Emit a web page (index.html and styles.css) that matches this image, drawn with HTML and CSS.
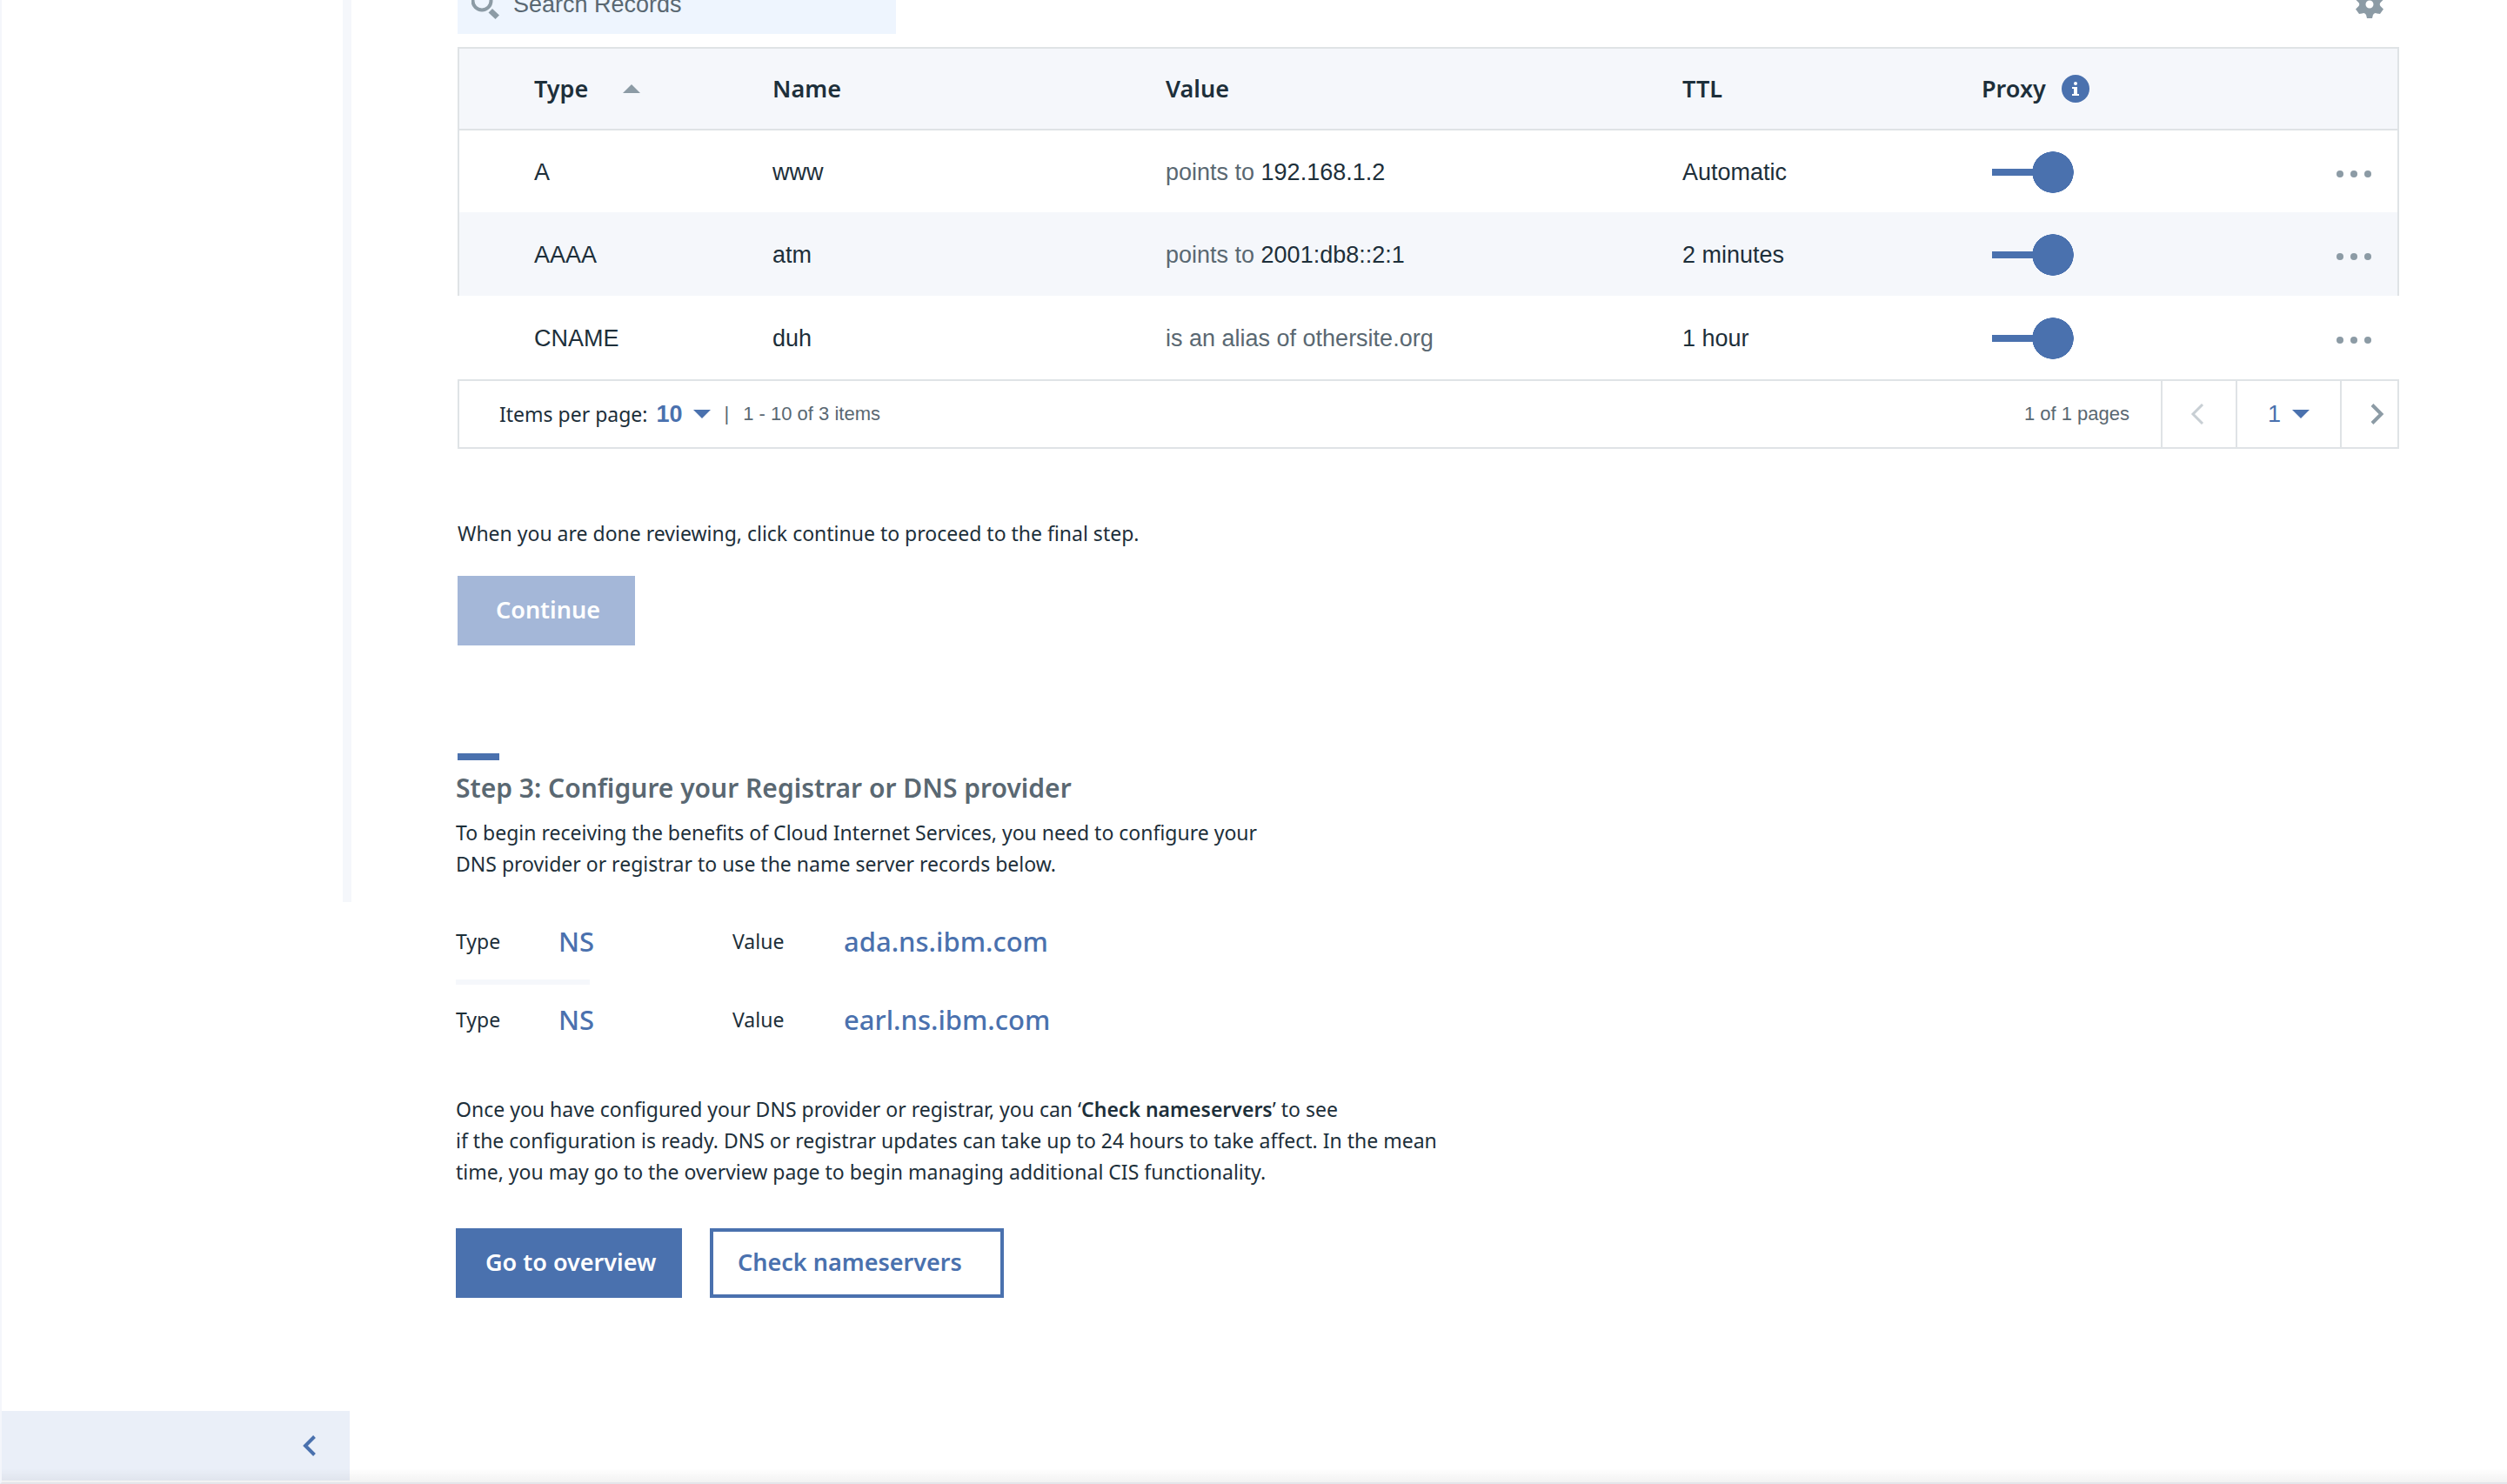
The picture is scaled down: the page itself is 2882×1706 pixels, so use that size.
FILE: index.html
```html
<!DOCTYPE html>
<html lang="en">
<head>
<meta charset="utf-8">
<title>Configure DNS</title>
<link rel="stylesheet" href="styles.css">
</head>
<body>
<div class="page">
  <aside class="sidebar">
    <div class="sidebar-rail"></div>
    <button class="sidebar-toggle" type="button" aria-label="Collapse navigation">
      <svg width="16" height="24" viewBox="0 0 16 24"><path d="M13.500 1.500 3 12l10.500 10.500" fill="none" stroke="currentColor" stroke-width="4"/></svg>
    </button>
  </aside>

  <main class="content">
    <div class="toolbar">
      <label class="search">
        <svg width="32" height="36" viewBox="0 0 32 36" aria-hidden="true"><circle cx="12" cy="14" r="10.500" fill="none" stroke="currentColor" stroke-width="4"/><path d="M19.500 27.500 24 23l8 7.500-4.500 4.500z" fill="currentColor"/></svg>
        <input class="search-input" type="search" placeholder="Search Records" aria-label="Search Records">
      </label>
      <button class="settings" type="button" aria-label="Table settings">
        <svg width="32" height="32" viewBox="-16 -16 32 32"><path fill="currentColor" fill-rule="evenodd" d="M-3 16-4 12Q-6 9-8.500 10.500L-12 11-16 5.500-12.500 2Q-11 0-12.500-2L-16-5.500-12-11-8.500-10.500Q-6-9-4-12L-3-16H3L4-12Q6-9 8.500-10.500L12-11 16-5.500 12.500-2Q11 0 12.500 2L16 5.500 12 11 8.500 10.500Q6 9 4 12L3 16ZM0-4.500A4.500 4.500 0 1 0 0 4.500 4.500 4.500 0 1 0 0-4.500Z"/></svg>
      </button>
    </div>

    <table class="records">
      <colgroup><col class="col-type"><col class="col-name"><col class="col-value"><col class="col-ttl"><col><col class="col-menu"></colgroup>
      <thead>
        <tr>
          <th scope="col"><span class="head sort">Type <svg width="20" height="10" viewBox="0 0 20 10" aria-hidden="true"><path d="M0 10 10 0l10 10z" fill="currentColor"/></svg></span></th>
          <th scope="col">Name</th>
          <th scope="col">Value</th>
          <th scope="col">TTL</th>
          <th scope="col"><span class="head">Proxy <svg class="info" width="32" height="32" viewBox="0 0 32 32" aria-hidden="true"><circle cx="16" cy="16" r="16" fill="currentColor"/><circle cx="16" cy="10" r="2" fill="#fff"/><path d="M12 14h6v8h2v2h-8v-2h2v-6h-2z" fill="#fff"/></svg></span></th>
          <th></th>
        </tr>
      </thead>
      <tbody>
        <tr>
          <td>A</td><td>www</td><td><span class="muted">points to</span> 192.168.1.2</td><td>Automatic</td>
          <td><input class="toggle" type="checkbox" checked aria-label="Proxy for www"></td>
          <td><button class="more" type="button" aria-label="More actions for www"><i></i><i></i><i></i></button></td>
        </tr>
        <tr>
          <td>AAAA</td><td>atm</td><td><span class="muted">points to</span> 2001:db8::2:1</td><td>2 minutes</td>
          <td><input class="toggle" type="checkbox" checked aria-label="Proxy for atm"></td>
          <td><button class="more" type="button" aria-label="More actions for atm"><i></i><i></i><i></i></button></td>
        </tr>
        <tr>
          <td>CNAME</td><td>duh</td><td><span class="muted">is an alias of othersite.org</span></td><td>1 hour</td>
          <td><input class="toggle" type="checkbox" checked aria-label="Proxy for duh"></td>
          <td><button class="more" type="button" aria-label="More actions for duh"><i></i><i></i><i></i></button></td>
        </tr>
      </tbody>
    </table>

    <div class="pagination">
      <label class="per-page" for="per-page">Items per page:</label>
      <span class="picker">
        <select class="picker-size" id="per-page"><option>10</option></select>
        <svg width="20" height="10" viewBox="0 0 20 10" aria-hidden="true"><path d="M0 0h20L10 10z" fill="currentColor"/></svg>
      </span>
      <span class="bar">|</span>
      <span class="count">1 - 10 of 3 items</span>
      <span class="count pages">1 of 1 pages</span>
      <button class="prev" type="button" disabled aria-label="Previous page"><svg width="16" height="24" viewBox="0 0 16 24"><path d="M14 1 3 12l11 11" fill="none" stroke="currentColor" stroke-width="3"/></svg></button>
      <span class="picker page-picker">
        <select class="picker-page" aria-label="Page"><option>1</option></select>
        <svg width="20" height="10" viewBox="0 0 20 10" aria-hidden="true"><path d="M0 0h20L10 10z" fill="currentColor"/></svg>
      </span>
      <button class="next" type="button" aria-label="Next page"><svg width="16" height="24" viewBox="0 0 16 24"><path d="M2 1.500 12.500 12 2 22.500" fill="none" stroke="currentColor" stroke-width="4"/></svg></button>
    </div>

    <p class="review">When you are done reviewing, click continue to proceed to the final step.</p>
    <button class="button button-disabled" type="button" disabled>Continue</button>

    <section class="step">
      <h2 class="step-title">Step 3: Configure your Registrar or DNS provider</h2>
      <p>To begin receiving the benefits of Cloud Internet Services, you need to configure your<br>DNS provider or registrar to use the name server records below.</p>
      <dl class="server"><dt>Type</dt><dd>NS</dd><dt>Value</dt><dd>ada.ns.ibm.com</dd></dl>
      <hr class="divider">
      <dl class="server"><dt>Type</dt><dd>NS</dd><dt>Value</dt><dd>earl.ns.ibm.com</dd></dl>
      <p class="closing">Once you have configured your DNS provider or registrar, you can ‘<b>Check nameservers</b>’ to see<br>if the configuration is ready. DNS or registrar updates can take up to 24 hours to take affect. In the mean<br>time, you may go to the overview page to begin managing additional CIS functionality.</p>
      <div class="actions">
        <button class="button button-primary" type="button">Go to overview</button>
        <button class="button button-secondary" type="button">Check nameservers</button>
      </div>
    </section>
  </main>
</div>
</body>
</html>
```
FILE: styles.css
```css
:root {
  --blue: #4a71ae;
  --ink: #1d2f3a;
  --muted: #5a6872;
  --icon: #8c9ba5;
  --line: #dfe3e6;
  --tint: #f5f7fb;
  --sans: "Noto Sans", sans-serif;
  --grotesk: "Liberation Sans", sans-serif;
}

* { box-sizing: border-box; }

body {
  margin: 0;
  background: #fff;
  color: var(--ink);
  font: 23px/36px var(--sans);
}

p, h2, dl, dd { margin: 0; }
svg { display: block; flex: none; }

button, input, select {
  margin: 0;
  padding: 0;
  border: 0;
  border-radius: 0;
  background: none;
  color: inherit;
  font: inherit;
  appearance: none;
}

.page {
  position: relative;
  display: flex;
  min-height: 100vh;
  overflow: hidden;
  border-left: 2px solid #f4f6fb;
  border-bottom: 2px solid #e4e5ea;
}

/* soft shade along the bottom edge of the window */
.page::after {
  content: "";
  position: absolute;
  inset: auto 0 0;
  height: 16px;
  background: linear-gradient(rgba(0, 0, 0, 0), rgba(0, 0, 0, .05));
  pointer-events: none;
}

.sidebar {
  display: flex;
  flex: none;
  flex-direction: column;
  justify-content: space-between;
  width: 402px;
}

.sidebar-rail {
  align-self: flex-end;
  width: 10px;
  height: 1037px;
  background: var(--tint);
}

.sidebar-toggle {
  display: flex;
  align-items: center;
  justify-content: flex-end;
  width: 400px;
  height: 80px;
  margin-bottom: 2px;
  padding-right: 38px;
  background: #eaeff8;
  color: var(--blue);
}

.content {
  flex: 1;
  min-width: 0;
  padding: 0 124px 120px 122px;
}

.toolbar {
  display: flex;
  align-items: center;
  justify-content: space-between;
  height: 68px;
  margin: -30px 0 16px;
  padding: 2px 18px 0 0;
}

.search {
  display: flex;
  align-items: center;
  gap: 16px;
  width: 504px;
  height: 68px;
  padding-left: 16px;
  background: #eef5fe;
  color: var(--icon);
}

.search-input {
  flex: 1;
  min-width: 0;
  height: 68px;
  color: var(--muted);
  font: 27px/36px var(--grotesk);
}

.search-input::placeholder { color: var(--muted); opacity: 1; }
.settings { color: var(--icon); }

.records {
  width: 100%;
  border-spacing: 0;
  table-layout: fixed;
  font: 27px/36px var(--grotesk);
}

.col-type { width: 362px; }
.col-name { width: 452px; }
.col-value { width: 594px; }
.col-ttl { width: 344px; }
.col-menu { width: 72px; }

.records th,
.records td {
  height: 96px;
  padding: 0;
  text-align: left;
}

.records td { padding-top: 2px; }

.records th {
  border: solid var(--line);
  border-width: 2px 0;
  background: var(--tint);
  font: 600 27px/36px var(--sans);
}

.records tr > :first-child { padding-left: 86px; border-left: 2px solid var(--line); }
.records tr > :last-child { border-right: 2px solid var(--line); }
.records tr:nth-child(2) td { background: var(--tint); }
.records tbody tr:first-child td { height: 94px; }
.records tbody tr:last-child > td { border-color: transparent; }

.head { display: flex; align-items: center; gap: 18px; }
.sort { gap: 40px; }
.sort svg { color: var(--icon); }
.info { color: var(--blue); }
.muted { color: var(--muted); }

.toggle {
  display: block;
  width: 94px;
  height: 48px;
  margin-left: 12px;
  background:
    radial-gradient(circle at 70px 24px, var(--blue) 23.500px, transparent 24px),
    linear-gradient(var(--blue), var(--blue)) 0 20px / 60px 8px no-repeat;
}

.more { display: flex; gap: 8px; padding-top: 4px; }
.more i { width: 8px; height: 8px; border-radius: 50%; background: var(--icon); }

.pagination {
  display: flex;
  align-items: center;
  height: 80px;
  padding-left: 46px;
  border: 2px solid var(--line);
}

.picker { display: flex; align-items: center; gap: 12px; color: var(--blue); }
.picker-size { width: 30px; margin-left: 10px; font: bold 27px/36px var(--grotesk); }
.picker-page { width: 16px; font: 27px/36px var(--grotesk); }
.bar { padding: 0 16px; color: var(--muted); font: 22px/36px var(--grotesk); }
.count { color: var(--muted); font: 22px/36px var(--grotesk); }
.pages { margin-left: auto; padding-right: 36px; }

.prev,
.page-picker,
.next {
  display: flex;
  align-items: center;
  justify-content: center;
  height: 76px;
  border-left: 2px solid var(--line);
}

.prev { width: 86px; padding-right: 4px; color: #c8cfd4; }
.page-picker { width: 120px; }
.next { width: 66px; padding-left: 18px; color: var(--icon); }

.review { margin: 79px 0 31px; }

.button {
  height: 80px;
  padding-bottom: 3px;
  font: 600 27px/36px var(--sans);
  text-align: left;
}

.button-disabled { width: 204px; padding-left: 44px; background: #a4b7d8; color: #fff; }
.button-primary { width: 260px; padding-left: 34px; background: var(--blue); color: #fff; }
.button-secondary { width: 338px; padding-left: 28px; border: 4px solid var(--blue); color: var(--blue); }

.step { margin: 124px 0 0 -2px; }

.step-title {
  margin-bottom: 11px;
  color: var(--muted);
  font: 600 30px/44px var(--sans);
}

.step-title::before {
  content: "";
  display: block;
  width: 48px;
  height: 8px;
  margin: 0 0 10px 2px;
  background: var(--blue);
}

.server {
  display: grid;
  grid-template-columns: 118px 200px 128px 1fr;
  align-items: center;
  margin-top: 47px;
}

.server dd { color: var(--blue); font: 500 31px/48px var(--sans); }

.divider {
  width: 154px;
  height: 6px;
  margin: 20px 0 0;
  border: 0;
  background: var(--tint);
}

.divider + .server { margin-top: 16px; }
.closing { margin: 61px 0 47px; }
.closing b { font-weight: 600; }
.actions { display: flex; gap: 32px; }
```
